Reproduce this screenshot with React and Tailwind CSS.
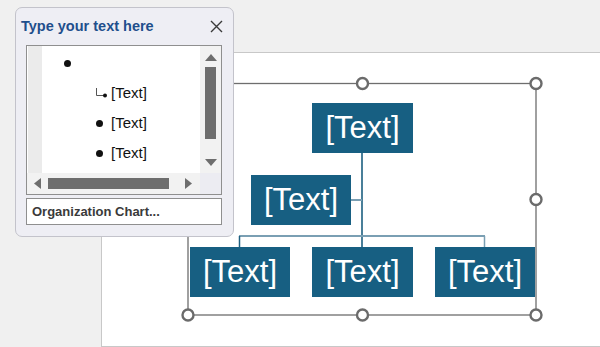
import React from "react";

const BOX = "absolute flex items-center justify-center bg-[#175f82] text-white text-[31px] leading-none";

function Handle({ x, y }) {
  return <circle cx={x} cy={y} r="5.5" fill="white" stroke="#6b6b6b" strokeWidth="2.4" />;
}

function Node({ className }) {
  return (
    <div className={`${BOX} ${className}`} style={{ fontFamily: '"Liberation Sans", Arial, sans-serif' }}>
      <span className="-mt-[2px]">[Text]</span>
    </div>
  );
}

function TreeRow({ kind, className = "" }) {
  return (
    <div className={`flex items-center h-[30px] ${className}`}>
      {kind === "sub" ? (
        <svg width="14" height="10" className="mr-[2px]">
          <path d="M1.5 0 V7.5 H9" stroke="#555" strokeWidth="1" fill="none" />
          <circle cx="10" cy="7.5" r="2" fill="#111" />
        </svg>
      ) : (
        <span className="w-[7px] h-[7px] rounded-full bg-[#111] mr-[8px]" />
      )}
      {kind !== "root" && <span className="text-[15px] text-[#111]">[Text]</span>}
    </div>
  );
}

export default function App() {
  return (
    <div
      className="relative w-[600px] h-[347px] bg-[#f0f0f0] overflow-hidden pl-[101px] pt-[52px]"
      style={{ fontFamily: '"Liberation Sans", Arial, sans-serif' }}
    >
      {/* slide canvas */}
      <div className="relative h-[295px] w-[520px] bg-white border-l border-t border-b border-[#c8c8c8]">
        {/* connectors + selection frame */}
        <svg className="absolute left-0 top-0" width="500" height="294">
          <rect x="86" y="30.5" width="348" height="231.5" fill="none" stroke="#6e6e6e" strokeWidth="1.3" />
          <line x1="260" y1="100" x2="260" y2="194" stroke="#1c5f80" strokeWidth="1.6" />
          <line x1="249" y1="147" x2="260" y2="147" stroke="#7a9fb3" strokeWidth="2" />
          <line x1="137" y1="183" x2="383" y2="183" stroke="#7a9fb3" strokeWidth="2" />
          <line x1="137.5" y1="183" x2="137.5" y2="194" stroke="#1c5f80" strokeWidth="1.5" />
          <line x1="382.5" y1="183" x2="382.5" y2="194" stroke="#7a9fb3" strokeWidth="1.5" />
          <Handle x={86} y={30.5} />
          <Handle x={260.5} y={30.5} />
          <Handle x={434} y={30.5} />
          <Handle x={434} y={146.5} />
          <Handle x={434} y={262} />
          <Handle x={260.5} y={262} />
          <Handle x={86} y={262} />
          <Handle x={86} y={146.5} />
        </svg>
        <Node className="left-[210px] top-[50px] w-[101px] h-[50px]" />
        <Node className="left-[149px] top-[122px] w-[100px] h-[50px]" />
        <Node className="left-[88px] top-[194px] w-[100px] h-[50px]" />
        <Node className="left-[210px] top-[194px] w-[101px] h-[50px]" />
        <Node className="left-[333px] top-[194px] w-[100px] h-[50px]" />
      </div>

      {/* text pane */}
      <div className="absolute left-[15px] top-[7px] w-[219px] h-[230px] rounded-[7px] border border-[#c3c3cb] bg-[#eeeef4] px-[10px] flex flex-col">
        <div className="flex items-center justify-between h-[37px]">
          <span className="-ml-[5px] text-[14.5px] font-bold text-[#1f4f8c]">Type your text here</span>
          <svg width="13" height="13" viewBox="0 0 13 13" className="-mt-[1px]">
            <path d="M1 1 L12 12 M12 1 L1 12" stroke="#3a3a3a" strokeWidth="1.4" />
          </svg>
        </div>
        <div className="border border-[#8f8f8f] bg-white w-[196px] h-[150px] flex flex-col">
          <div className="flex flex-1 min-h-0">
            <div className="w-[14px] bg-[#ebebeb] ml-[1px]" />
            <div className="flex-1 pt-[2px]">
              <TreeRow kind="root" className="pl-[22px]" />
              <TreeRow kind="sub" className="pl-[53px]" />
              <TreeRow kind="dot" className="pl-[54px]" />
              <TreeRow kind="dot" className="pl-[54px]" />
            </div>
            <div className="w-[21px] bg-[#f2f2f2] flex flex-col items-center pt-[7px]">
              <svg width="12" height="8"><path d="M0 8 L6 1 L12 8 Z" fill="#6e6e6e" /></svg>
              <div className="w-[11px] h-[72px] bg-[#6e6e6e] mt-[6px]" />
              <svg width="12" height="8" className="mt-[20px]"><path d="M0 0 L6 7 L12 0 Z" fill="#6e6e6e" /></svg>
            </div>
          </div>
          <div className="flex h-[21px]">
            <div className="flex-1 bg-[#f2f2f2] flex items-center pl-[6px]">
              <svg width="8" height="11"><path d="M8 0 L1 5.5 L8 11 Z" fill="#6e6e6e" /></svg>
              <div className="w-[121px] h-[11px] bg-[#6e6e6e] ml-[7px]" />
              <svg width="8" height="11" className="ml-[16px]"><path d="M0 0 L7 5.5 L0 11 Z" fill="#6e6e6e" /></svg>
            </div>
            <div className="w-[21px] bg-[#ececf2]" />
          </div>
        </div>
        <div className="mt-[3px] w-[196px] h-[27px] border border-[#8f8f8f] bg-white flex items-center pl-[5px]">
          <span className="text-[13px] font-bold text-[#3a3a3a]">Organization Chart...</span>
        </div>
      </div>
    </div>
  );
}
